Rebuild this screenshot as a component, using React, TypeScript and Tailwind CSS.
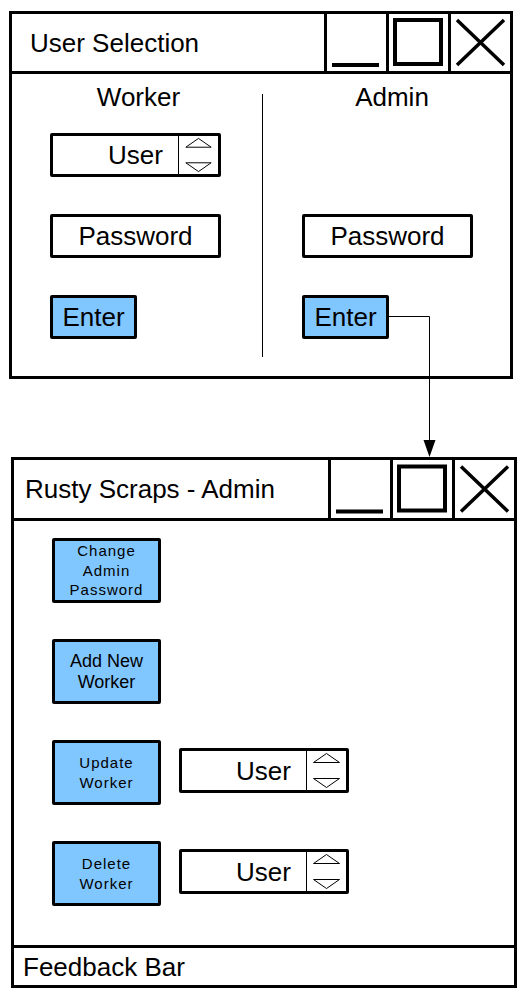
const blue = "bg-[#80C6FF]";

const WindowControls = () => (
    <div className="flex h-full">
        <div className="h-full w-[62px] border-l-[3px] border-black">
            <svg viewBox="0 0 59 57" className="h-full w-full">
                <rect x="5" y="49" width="47" height="4" fill="#000" />
            </svg>
        </div>
        <div className="h-full w-[62px] border-l-[3px] border-black">
            <svg viewBox="0 0 59 57" className="h-full w-full">
                <rect x="6" y="6" width="46" height="44" fill="none" stroke="#000" strokeWidth="4" />
            </svg>
        </div>
        <div className="h-full w-[62px] border-l-[3px] border-black">
            <svg viewBox="0 0 59 57" className="h-full w-full">
                <path d="M6 6 L53 51 M53 6 L6 51" stroke="#000" strokeWidth="3.5" fill="none" />
            </svg>
        </div>
    </div>
);

const Arrows = () => (
    <svg viewBox="0 0 39 39" className="h-full w-full">
        <polygon points="6.5,11.5 19.5,2.5 32.5,11.5" fill="none" stroke="#000" strokeWidth="1" />
        <polygon points="6.5,27.5 32.5,27.5 19.5,36.5" fill="none" stroke="#000" strokeWidth="1" />
    </svg>
);

const UserSpinner = ({ size }: { size: string }) => (
    <div className={`flex ${size} rounded-[2px] border-[3px] border-black bg-white`}>
        <div className="flex flex-1 items-center justify-end pr-[15px] text-[26px] leading-none">User</div>
        <div className="w-[40px] border-l border-black">
            <Arrows />
        </div>
    </div>
);

const TextBox = ({ label }: { label: string }) => (
    <div className="flex h-[44px] w-[171px] items-center justify-center rounded-[2px] border-[3px] border-black bg-white text-[26px] leading-none">
        {label}
    </div>
);

const EnterButton = () => (
    <div className={`flex h-[44px] w-[87px] items-center justify-center rounded-[2px] border-[3px] border-black ${blue} text-[26px] leading-none`}>
        Enter
    </div>
);

const AdminButton = ({ lines, big }: { lines: string[]; big?: boolean }) => (
    <div
        className={`flex h-[65px] w-[109px] flex-none flex-col items-center justify-center rounded-[2px] border-[3px] border-black ${blue} text-center ${
            big ? "text-[18px] leading-[21px]" : "text-[15px] leading-[19.5px] tracking-[1px]"
        }`}
    >
        {lines.map((l) => (
            <span key={l}>{l}</span>
        ))}
    </div>
);

export default function App() {
    return (
        <div className="relative h-[996px] w-[526px] overflow-hidden bg-white font-['Liberation_Sans',Arial,sans-serif] text-black">
            {/* login window */}
            <div className="ml-[9px] mt-[11px] flex h-[368px] w-[504px] flex-col border-[3px] border-black">
                <div className="flex h-[60px] flex-none border-b-[3px] border-black">
                    <div className="flex flex-1 items-center pl-[18px] text-[26px] leading-none">User Selection</div>
                    <WindowControls />
                </div>
                <div className="flex flex-1 pl-[38px]">
                    <div className="flex w-[171px] flex-col pt-[8px]">
                        <div className="pl-[6px] text-center text-[26px] leading-[30px]">Worker</div>
                        <div className="mt-[21px]">
                            <UserSpinner size="h-[44px] w-[171px]" />
                        </div>
                        <div className="mt-[37px]">
                            <TextBox label="Password" />
                        </div>
                        <div className="mt-[37px]">
                            <EnterButton />
                        </div>
                    </div>
                    <div className="ml-[41px] mb-[19px] mt-[20px] w-px bg-black" />
                    <div className="ml-[39px] flex w-[171px] flex-col pt-[8px]">
                        <div className="pl-[9px] text-center text-[26px] leading-[30px]">Admin</div>
                        <div className="mt-[102px]">
                            <TextBox label="Password" />
                        </div>
                        <div className="mt-[37px]">
                            <EnterButton />
                        </div>
                    </div>
                </div>
            </div>

            {/* admin window */}
            <div className="ml-[11px] mt-[78px] flex h-[531px] w-[506px] flex-col border-[3px] border-black">
                <div className="flex h-[61px] flex-none border-b-[3px] border-black">
                    <div className="flex flex-1 items-center pl-[11px] text-[26px] leading-none">Rusty Scraps - Admin</div>
                    <WindowControls />
                </div>
                <div className="flex flex-1 flex-col gap-[36px] pl-[38px] pt-[17px]">
                    <AdminButton lines={["Change", "Admin", "Password"]} />
                    <AdminButton lines={["Add New", "Worker"]} big />
                    <div className="flex items-start gap-[18px]">
                        <AdminButton lines={["Update", "Worker"]} />
                        <div className="mt-[8px]">
                            <UserSpinner size="h-[45px] w-[170px]" />
                        </div>
                    </div>
                    <div className="flex items-start gap-[18px]">
                        <AdminButton lines={["Delete", "Worker"]} />
                        <div className="mt-[8px]">
                            <UserSpinner size="h-[45px] w-[170px]" />
                        </div>
                    </div>
                </div>
                <div className="flex h-[40px] flex-none items-center border-t-[3px] border-black pl-[9px] text-[26px] leading-none">
                    Feedback Bar
                </div>
            </div>

            {/* connector from admin Enter to admin window */}
            <svg className="pointer-events-none absolute left-0 top-0" width="526" height="996">
                <path d="M388 316.5 H429.5 V442" stroke="#000" strokeWidth="1" fill="none" />
                <polygon points="423.5,440 435.5,440 429.5,457" fill="#000" />
            </svg>
        </div>
    );
}
